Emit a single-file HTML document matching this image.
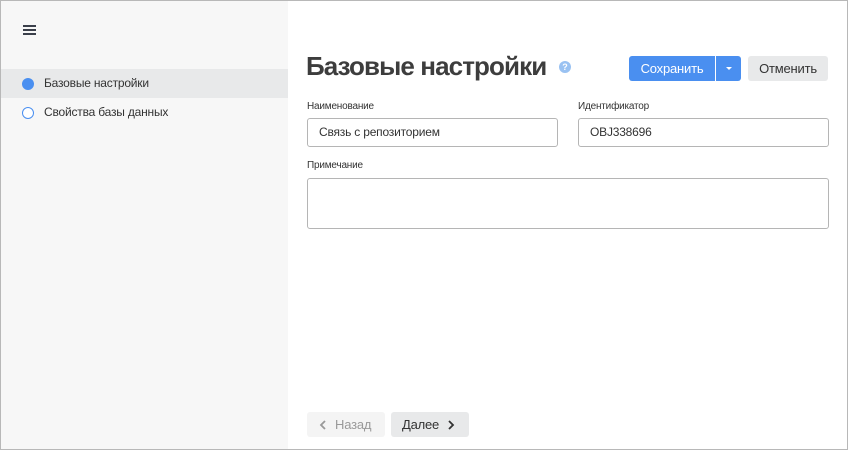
<!DOCTYPE html>
<html><head><meta charset="utf-8"><style>
*{box-sizing:border-box;margin:0;padding:0}
body{width:848px;height:450px;font-family:"Liberation Sans",sans-serif;background:#fff;position:relative;overflow:hidden;color:#333;letter-spacing:-0.2px}
.frame{position:absolute;left:0;top:0;width:848px;height:450px;border:1px solid #b8b8b8;}
.side{position:absolute;left:1px;top:1px;width:287px;height:448px;background:#f7f7f7}
.hamb{position:absolute;left:22px;top:24px;width:13px}
.hamb i{display:block;height:2px;background:#3a3f4a;margin-bottom:2px}
.item{position:absolute;left:0;width:287px;height:29px;font-size:12px;line-height:29px;padding-left:43px;color:#333}
.item .dot{position:absolute;left:21px;top:9px;width:12px;height:12px;border-radius:50%}
.a{top:68px;background:#e8e9ea}
.a .dot{background:#4a8ff0}
.b{top:97px}
.b .dot{border:1.5px solid #4a8ff0;background:#fff}
h1{position:absolute;left:306px;top:51px;font-size:26px;font-weight:bold;color:#3d3d3d;letter-spacing:-0.9px;white-space:nowrap}
.q{position:absolute;left:559px;top:61px;width:12px;height:12px;border-radius:50%;background:#9ac2f2;color:#fff;font-size:9px;font-weight:bold;text-align:center;line-height:12px;letter-spacing:0}
.btn{position:absolute;height:25px;top:56px;font-size:13px;line-height:25px;text-align:center;border-radius:3px}
.save{left:629px;width:86px;background:#4a8ff0;color:#fff;border-radius:3px 0 0 3px}
.dd{left:716px;width:25px;background:#4a8ff0;border-radius:0 3px 3px 0}
.dd:after{content:"";position:absolute;left:10px;top:11px;border:3px solid transparent;border-top:3px solid #fff}
.cancel{left:748px;width:80px;background:#e8e9ea;color:#333}
.lbl{position:absolute;font-size:10px;color:#333}
.inp{position:absolute;height:29px;border:1px solid #b5b5b5;border-radius:3px;font-size:12px;line-height:27px;padding-left:11px;color:#333}
.nav{position:absolute;top:412px;height:25px;font-size:13px;line-height:25px;border-radius:3px}
</style></head><body>
<div class="side">
<div class="hamb"><i></i><i></i><i></i></div>
<div class="item a"><span class="dot"></span>Базовые настройки</div>
<div class="item b"><span class="dot"></span>Свойства базы данных</div>
</div>
<div class="frame"></div>
<h1>Базовые настройки</h1>
<div class="q">?</div>
<div class="btn save">Сохранить</div>
<div class="btn dd"></div>
<div class="btn cancel">Отменить</div>
<div class="lbl" style="left:307px;top:101px">Наименование</div>
<div class="lbl" style="left:578px;top:101px">Идентификатор</div>
<div class="inp" style="left:307px;top:118px;width:251px">Связь с репозиторием</div>
<div class="inp" style="left:578px;top:118px;width:251px">OBJ338696</div>
<div class="lbl" style="left:307px;top:160px">Примечание</div>
<div class="inp" style="left:307px;top:178px;width:522px;height:51px"></div>
<div class="nav" style="left:307px;width:78px;background:#f4f4f4;color:#999;padding-left:12px">
<svg width="8" height="10" style="vertical-align:-1px;margin-right:8px"><path d="M6 1L2 5l4 4" stroke="#999" stroke-width="1.8" fill="none"/></svg>Назад</div>
<div class="nav" style="left:391px;width:78px;background:#e8e9ea;color:#333;padding-left:11px">Далее<svg width="8" height="10" style="vertical-align:-1px;margin-left:8px"><path d="M2 1l4 4-4 4" stroke="#333" stroke-width="1.8" fill="none"/></svg></div>
</body></html>
